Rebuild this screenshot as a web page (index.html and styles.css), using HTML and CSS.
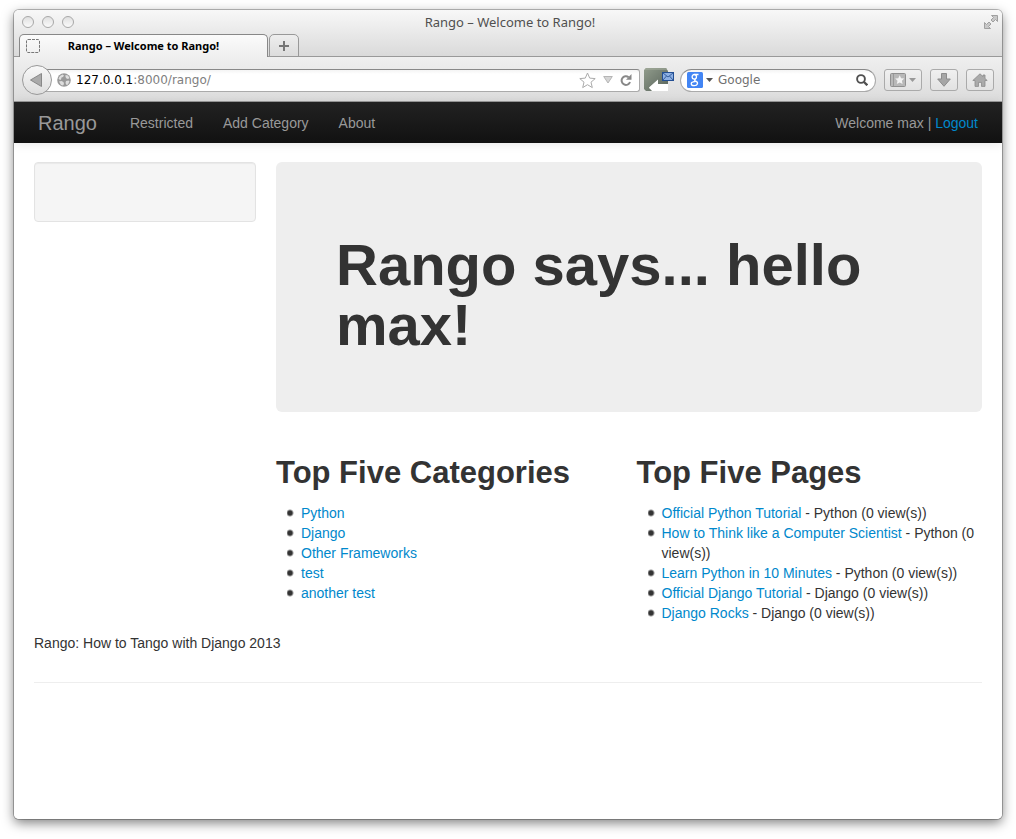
FILE: index.html
```html
<!DOCTYPE html>
<html lang="en">
<head>
<meta charset="utf-8">
<meta name="viewport" content="width=device-width, initial-scale=1">
<title>Rango – Welcome to Rango!</title>
<link rel="stylesheet" href="styles.css">
</head>
<body>
<div class="window">
  <div class="chrome-top">
    <div class="titlebar">
      <div class="lights">
        <button class="light" aria-label="Close window"></button>
        <button class="light" aria-label="Minimize window"></button>
        <button class="light" aria-label="Zoom window"></button>
      </div>
      <span class="window-title">Rango – Welcome to Rango!</span>
      <button class="fullscreen" aria-label="Full screen">
        <svg width="14" height="14" viewBox="0 0 14 14" fill="#c8c8c8" stroke="#a0a0a0" stroke-width="1"><path d="M7.500.5h6v6l-2-2-2.500 2.500-2-2L9.500 2.500z"/><path d="M6.500 13.500h-6v-6l2 2L5 7l2 2-2.500 2.500z"/></svg>
      </button>
    </div>
    <div class="tabs">
      <button class="tab">
        <svg width="14" height="14" viewBox="0 0 14 14" fill="none" stroke="#777" stroke-width="1" stroke-dasharray="3 1"><rect x=".5" y=".5" width="13" height="13" rx="1.500"/></svg>
        <span class="tab-label">Rango – Welcome to Rango!</span>
      </button>
      <button class="new-tab" aria-label="New tab">
        <svg width="10" height="10" viewBox="0 0 10 10" fill="#777"><path d="M4 0h2v4h4v2H6v4H4V6H0V4h4z"/></svg>
      </button>
    </div>
  </div>
  <div class="toolbar">
    <button class="back" aria-label="Back">
      <svg width="12" height="14" viewBox="0 0 12 14"><path d="M11.500.5v13L.5 7z" fill="#aaa" stroke="#888"/></svg>
    </button>
    <div class="address">
      <svg width="14" height="14" viewBox="0 0 14 14"><circle cx="7" cy="7" r="6.800" fill="#999"/><path d="M1.500 5.500L3 3l2.500-1.500L7 2.500 6 4 4.500 4.500 4 6.500l-1 .5zM8.500 2l2.500.5L12.500 5 11 6 9.500 5.500 8.500 4zM2 8.500l2.500-.5L6.500 9 7 11l-1 1.500-2-.5zM9 8l2.500-.5 1 1L11 11.500 9.500 12 8.500 10z" fill="#dedede"/></svg>
      <div class="url" role="textbox" aria-label="Address" tabindex="0"><span class="host">127.0.0.1</span>:8000/rango/</div>
      <button class="plain" aria-label="Bookmark this page"><svg width="17" height="17" viewBox="0 0 17 17"><path d="M8.500 1l2.200 5.100 5.500.5-4.200 3.600 1.300 5.400-4.800-2.900-4.800 2.900L5 10.200.8 6.600l5.500-.5z" fill="#fff" stroke="#aaa"/></svg></button>
      <button class="plain" aria-label="Show history"><svg width="10" height="8" viewBox="0 0 10 8"><path d="M.7.5h8.600L5 7z" fill="#d5d5d5" stroke="#b5b5b5"/></svg></button>
      <button class="plain" aria-label="Reload"><svg width="12" height="12" viewBox="0 0 12 12"><path d="M8.600 3.200A4.300 4.300 0 1 0 10 8" fill="none" stroke="#888" stroke-width="2"/><path d="M11.500 0v5.800H6z" fill="#888"/></svg></button>
    </div>
    <button class="plain addon" aria-label="Mail add-on">
      <svg width="30" height="24" viewBox="0 0 30 24"><defs><linearGradient id="g" x1="0" y1="0" x2="1" y2="1"><stop offset="0" stop-color="#919c8c"/><stop offset="1" stop-color="#58635a"/></linearGradient></defs><path d="M2 0h20l2 3v13H14v-4L5 20l4 3H2l-2-2V2z" fill="url(#g)"/><path d="M1 1h22" stroke="#a8b0a0"/><path d="M5 19.500l9-8V16h10v7H8z" fill="#fff"/><rect x="18.500" y="4.500" width="11" height="8" fill="#8db0e4" stroke="#234f93"/><path d="M19 5l5 4 5-4M19 12l3.500-4M29 12l-3.500-4" fill="none" stroke="#365f9e"/></svg>
    </button>
    <div class="search">
      <svg width="16" height="16" viewBox="0 0 16 16"><rect width="16" height="16" rx="1.500" fill="#4285f4"/><g fill="none" stroke="#fff" stroke-width="1.300"><ellipse cx="7.300" cy="4.800" rx="2.200" ry="2.300"/><path d="M7.500 2.500h4M8.800 6.700c-2 1.100-1.500 1.700 0 2.400 3 1.500 1.700 4.600-1.500 4.600-3.700 0-3.900-3.200-1.200-3.900 1-.3 2-.3 2.500-.2"/></g></svg>
      <svg width="7" height="4" viewBox="0 0 7 4"><path d="M0 0h7L3.500 4z" fill="#555"/></svg>
      <input class="search-input" type="text" placeholder="Google" aria-label="Search with Google">
      <button class="plain" aria-label="Search"><svg width="12" height="12" viewBox="0 0 12 12" fill="none" stroke="#505050"><circle cx="5" cy="5" r="3.900" stroke-width="1.900"/><path d="M8 8l3.300 3.300" stroke-width="2.300"/></svg></button>
    </div>
    <div class="tools">
      <button class="tool" aria-label="Bookmarks">
        <svg width="16" height="14" viewBox="0 0 16 14"><rect x=".5" y=".5" width="15" height="13" rx="1" fill="#b8b8b8" stroke="#909090"/><path d="M3.500 1v12" stroke="#999"/><path d="M9.700 2.200l1.400 3 3.200.4-2.400 2.200.7 3.200-2.900-1.600L6.800 11l.7-3.200-2.400-2.200 3.200-.4z" fill="#f3f3f3"/></svg>
        <svg width="7" height="4" viewBox="0 0 7 4"><path d="M0 0h7L3.500 4z" fill="#999"/></svg>
      </button>
      <button class="tool" aria-label="Downloads"><svg width="14" height="14" viewBox="0 0 14 14"><path d="M4.500.5h5V6h3.800L7 13.300.7 6h3.800z" fill="#a6a6a6" stroke="#8c8c8c"/></svg></button>
      <button class="tool" aria-label="Home"><svg width="16" height="14" viewBox="0 0 16 14"><path d="M8 .8L11 3.600V2h2v3.500l2.200 2H13v5.900H9.500v-4h-3v4H3V7.500H.8z" fill="#aaa" stroke="#8c8c8c" stroke-width=".8"/></svg></button>
    </div>
  </div>
  <div class="page">
    <nav class="navbar">
      <a class="brand" href="#">Rango</a>
      <a class="nav-link" href="#">Restricted</a>
      <a class="nav-link" href="#">Add Category</a>
      <a class="nav-link" href="#">About</a>
      <p class="welcome">Welcome max | <a href="#">Logout</a></p>
    </nav>
    <div class="container">
      <div class="row">
        <aside class="well"></aside>
        <main class="main">
          <div class="hero"><h1>Rango says... hello max!</h1></div>
          <div class="lists">
            <section>
              <h2>Top Five Categories</h2>
              <ul>
                <li><a href="#">Python</a></li>
                <li><a href="#">Django</a></li>
                <li><a href="#">Other Frameworks</a></li>
                <li><a href="#">test</a></li>
                <li><a href="#">another test</a></li>
              </ul>
            </section>
            <section>
              <h2>Top Five Pages</h2>
              <ul>
                <li><a href="#">Official Python Tutorial</a> - Python (0 view(s))</li>
                <li><a href="#">How to Think like a Computer Scientist</a> - Python (0 view(s))</li>
                <li><a href="#">Learn Python in 10 Minutes</a> - Python (0 view(s))</li>
                <li><a href="#">Official Django Tutorial</a> - Django (0 view(s))</li>
                <li><a href="#">Django Rocks</a> - Django (0 view(s))</li>
              </ul>
            </section>
          </div>
        </main>
      </div>
      <footer><p>Rango: How to Tango with Django 2013</p></footer>
      <hr>
    </div>
  </div>
</div>
</body>
</html>
```
FILE: styles.css
```css
* { box-sizing: border-box; }
body {
  margin: 0;
  padding: 10px 14px 20px;
  min-height: 100vh;
  display: flex;
  background: #fff;
  color: #333;
  font: 14px/20px "Liberation Sans", Arial, sans-serif;
}
a { color: #08c; text-decoration: none; }
button { margin: 0; padding: 0; border: 0; background: none; font: inherit; color: inherit; }
svg { display: block; flex: none; }

.window {
  flex: 1;
  min-width: 0;
  display: flex;
  flex-direction: column;
  border-radius: 5px;
  overflow: hidden;
  box-shadow: 0 0 0 1px rgba(0,0,0,.25), 0 4px 12px rgba(0,0,0,.5);
}
.chrome-top {
  background: linear-gradient(#f8f8f8, #d9d9d9);
  font: 13px/16px "Noto Sans", sans-serif;
}
.titlebar {
  display: grid;
  grid-template-columns: 1fr auto 1fr;
  align-items: center;
  height: 24px;
  padding: 0 4px 0 8px;
}
.lights { display: flex; gap: 8px; }
.light {
  width: 12px;
  height: 12px;
  border: 1px solid #a8a8a8;
  border-radius: 50%;
  background: linear-gradient(#e0e0e0, #fafafa);
}
.window-title { color: #505050; }
.fullscreen { justify-self: end; }
.tabs {
  display: flex;
  height: 23px;
  padding-left: 5px;
  box-shadow: inset 0 -1px #999;
}
.tab {
  display: flex;
  align-items: center;
  width: 249px;
  padding: 0 6px;
  border: 1px solid #888;
  border-bottom: 0;
  border-radius: 5px 5px 0 0;
  background: linear-gradient(#fbfbfb, #efefef);
  color: #000;
  font-size: 11px;
  font-weight: bold;
}
.tab-label { flex: 1; text-align: center; padding-right: 14px; }
.new-tab {
  display: flex;
  align-items: center;
  justify-content: center;
  width: 30px;
  margin-left: 1px;
  border: 1px solid #999;
  border-radius: 5px 5px 0 0;
  background: linear-gradient(#eee, #dcdcdc);
}
.toolbar {
  display: flex;
  align-items: center;
  height: 45px;
  padding: 2px 8px 0;
  background: linear-gradient(#efefef, #dcdcdc);
  border-bottom: 1px solid #999;
  font: 12px/16px "DejaVu Sans", sans-serif;
}
.back {
  display: flex;
  align-items: center;
  justify-content: center;
  flex: none;
  width: 30px;
  height: 30px;
  padding-right: 3px;
  border: 1px solid #999;
  border-radius: 50%;
  background: linear-gradient(#f8f8f8, #dedede);
  z-index: 1;
}
.address, .search {
  display: flex;
  align-items: center;
  height: 23px;
  border: 1px solid #aaa;
  border-top-color: #888;
  background: linear-gradient(#f4f4f4, #fff 4px);
}
.address {
  flex: 3 1 0;
  min-width: 0;
  gap: 7px;
  margin-left: -15px;
  padding: 0 7px 0 19px;
  border-radius: 0 3px 3px 0;
}
.url { flex: 1; min-width: 0; margin-left: -2px; color: #808080; white-space: nowrap; overflow: hidden; }
.host { color: #000; }
.addon { margin: 0 6px 0 4px; }
.search {
  flex: 0 1 196px;
  min-width: 0;
  gap: 3px;
  padding: 0 7px 0 6px;
  border-radius: 12px;
}
.search-input {
  flex: 1;
  min-width: 0;
  padding: 0 2px;
  border: 0;
  background: none;
  font: inherit;
  color: #707070;
}
.search-input::placeholder { color: #707070; opacity: 1; }
.tools { display: flex; gap: 8px; margin-left: 8px; }
.tool {
  display: flex;
  align-items: center;
  justify-content: center;
  gap: 3px;
  min-width: 28px;
  height: 22px;
  padding: 0 5px;
  border: 1px solid #aaa;
  border-radius: 3px;
  background: linear-gradient(#f0f0f0, #e2e2e2);
}

.page { flex: 1; background: #fff; }
.navbar {
  display: flex;
  align-items: center;
  min-height: 41px;
  padding: 0 24px;
  background: linear-gradient(#222, #111);
  box-shadow: 0 1px 10px rgba(0,0,0,.1);
  color: #999;
}
.navbar .brand { margin-right: 18px; font-size: 20px; color: #999; }
.nav-link { padding: 0 15px; color: #999; }
.welcome { margin: 0 0 0 auto; }
.container { padding: 19px 20px; }
.row { display: grid; grid-template-columns: repeat(12, minmax(0, 1fr)); gap: 20px; }
.well {
  grid-column: span 3;
  align-self: start;
  min-height: 60px;
  padding: 19px;
  background: #f5f5f5;
  border: 1px solid #e3e3e3;
  border-radius: 4px;
  box-shadow: inset 0 1px 1px rgba(0,0,0,.05);
}
.main { grid-column: span 9; }
.hero {
  margin-bottom: 31px;
  padding: 73px 60px 57px;
  background: #eee;
  border-radius: 6px;
}
h1, h2 { margin: 0; font-weight: bold; }
h1 { font-size: 58px; line-height: 60px; }
h2 { margin: 10px 0; font-size: 31px; line-height: 40px; }
.lists { display: grid; grid-template-columns: 1fr 1fr; gap: 15px; }
ul { margin: 0 0 10px 11px; padding: 0; list-style: none; }
li {
  padding-left: 14px;
  background: radial-gradient(circle at 3px 10px, #333 2px, transparent 4px) no-repeat;
}
footer p { margin: 0 0 10px; }
hr { margin: 29px 0 20px; border: 0; border-top: 1px solid #eee; }
```
